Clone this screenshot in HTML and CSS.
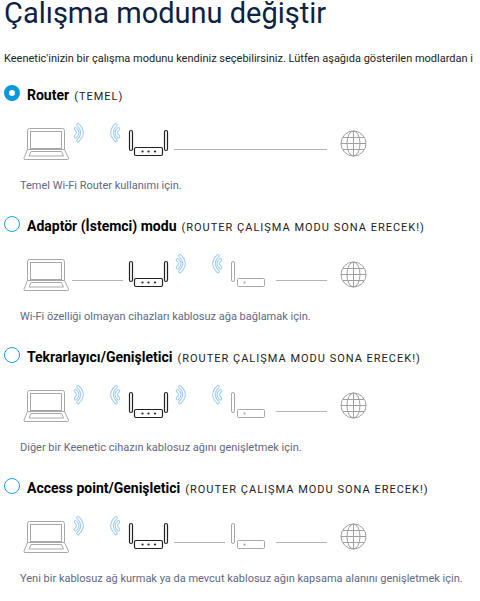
FILE: index.html
```
<!DOCTYPE html>
<html lang="tr">
<head>
    <meta charset="UTF-8">
    <meta name="viewport" content="width=device-width, initial-scale=1.0">
    <title>Çalışma modunu değiştir</title>
    <link rel="stylesheet" href="styles.css">
</head>
<body>

    <!-- Shared drawings for the network diagrams -->
    <svg class="sprite" aria-hidden="true">
        <symbol id="laptop" viewBox="0 0 51 40">
            <g fill="none" stroke="#a8a8a8">
                <path d="M6.5 27.5V8.5a2 2 0 0 1 2-2h33a2 2 0 0 1 2 2v19"/>
                <rect x="9.5" y="9.5" width="31" height="17"/>
                <path d="M6.5 27.5h37l4 8.5q.5 1.5-1 1.5h-42.5q-1.500 0-1-1.5z"/>
                <path d="M10 29.5h30.5l2 4.5h-34.5z"/>
            </g>
        </symbol>
        <symbol id="router" viewBox="0 0 51 40">
            <g fill="none" stroke="#222" stroke-width="1.2">
                <rect x="6.5" y="8.5" width="3" height="20" rx="1.5"/>
                <rect x="41.5" y="8.5" width="3" height="20" rx="1.5"/>
                <rect x="11.5" y="25.5" width="28" height="8" rx="1.5"/>
            </g>
            <g fill="#222">
                <circle cx="19.5" cy="29.5" r="1.1"/>
                <circle cx="25.5" cy="29.5" r="1.1"/>
                <circle cx="32" cy="29.5" r="1.1"/>
            </g>
        </symbol>
        <symbol id="modem" viewBox="0 0 51 40">
            <g fill="none" stroke="#a8a8a8">
                <rect x="6.5" y="8.5" width="3" height="20" rx="1.5"/>
                <rect x="12.5" y="25.5" width="27" height="8" rx="1"/>
            </g>
            <circle cx="19.5" cy="29.5" r="1" fill="#999"/>
        </symbol>
        <symbol id="globe" viewBox="0 0 51 40">
            <g fill="none" stroke="#a0a0a0">
                <circle cx="26.5" cy="21.5" r="12.5"/>
                <ellipse cx="26.5" cy="21.5" rx="6.5" ry="12.5"/>
                <path d="M26.5 9v25M14 21.5h25M16 15.5h21M16 27.5h21"/>
            </g>
        </symbol>
        <symbol id="line" viewBox="0 0 51 40">
            <path d="M0 27.5h51" stroke="#b4b4b4"/>
        </symbol>
        <symbol id="waves" viewBox="0 0 51 40">
            <g id="arcs" fill="none" stroke-linecap="round">
                <g stroke="#9ccbfa" stroke-width="3.6">
                    <path d="M6 2.8Q14 10.5 6 18.5"/>
                    <path d="M3.5 6.8Q8 10.5 3.5 14.6"/>
                </g>
                <g stroke="#fff" stroke-width="1.6">
                    <path d="M6 2.8Q14 10.5 6 18.5"/>
                    <path d="M3.5 6.8Q8 10.5 3.5 14.6"/>
                </g>
            </g>
            <use href="#arcs" transform="matrix(-1 0 0 1 50 0)"/>
        </symbol>
    </svg>

    <main class="page">
        <h1>Çalışma modunu değiştir</h1>
        <p class="intro">Keenetic'inizin bir çalışma modunu kendiniz seçebilirsiniz. Lütfen aşağıda gösterilen modlardan i</p>

        <form class="modes">
            <section class="mode">
                <label class="mode-head">
                    <input type="radio" name="mode" value="router" checked>
                    <span class="mode-name">Router</span>
                    <span class="mode-note">(TEMEL)</span>
                </label>
                <div class="diagram">
                    <svg><use href="#laptop"/></svg>
                    <svg><use href="#waves"/></svg>
                    <svg><use href="#router"/></svg>
                    <svg><use href="#line"/></svg>
                    <svg><use href="#line"/></svg>
                    <svg><use href="#line"/></svg>
                    <svg><use href="#globe"/></svg>
                </div>
                <p class="mode-text">Temel Wi-Fi Router kullanımı için.</p>
            </section>

            <section class="mode">
                <label class="mode-head">
                    <input type="radio" name="mode" value="adapter">
                    <span class="mode-name">Adaptör (İstemci) modu</span>
                    <span class="mode-note">(ROUTER ÇALIŞMA MODU SONA ERECEK!)</span>
                </label>
                <div class="diagram">
                    <svg><use href="#laptop"/></svg>
                    <svg><use href="#line"/></svg>
                    <svg><use href="#router"/></svg>
                    <svg><use href="#waves"/></svg>
                    <svg><use href="#modem"/></svg>
                    <svg><use href="#line"/></svg>
                    <svg><use href="#globe"/></svg>
                </div>
                <p class="mode-text">Wi-Fi özelliği olmayan cihazları kablosuz ağa bağlamak için.</p>
            </section>

            <section class="mode">
                <label class="mode-head">
                    <input type="radio" name="mode" value="repeater">
                    <span class="mode-name">Tekrarlayıcı/Genişletici</span>
                    <span class="mode-note">(ROUTER ÇALIŞMA MODU SONA ERECEK!)</span>
                </label>
                <div class="diagram">
                    <svg><use href="#laptop"/></svg>
                    <svg><use href="#waves"/></svg>
                    <svg><use href="#router"/></svg>
                    <svg><use href="#waves"/></svg>
                    <svg><use href="#modem"/></svg>
                    <svg><use href="#line"/></svg>
                    <svg><use href="#globe"/></svg>
                </div>
                <p class="mode-text">Diğer bir Keenetic cihazın kablosuz ağını genişletmek için.</p>
            </section>

            <section class="mode">
                <label class="mode-head">
                    <input type="radio" name="mode" value="ap">
                    <span class="mode-name">Access point/Genişletici</span>
                    <span class="mode-note">(ROUTER ÇALIŞMA MODU SONA ERECEK!)</span>
                </label>
                <div class="diagram">
                    <svg><use href="#laptop"/></svg>
                    <svg><use href="#waves"/></svg>
                    <svg><use href="#router"/></svg>
                    <svg><use href="#line"/></svg>
                    <svg><use href="#modem"/></svg>
                    <svg><use href="#line"/></svg>
                    <svg><use href="#globe"/></svg>
                </div>
                <p class="mode-text">Yeni bir kablosuz ağ kurmak ya da mevcut kablosuz ağın kapsama alanını genişletmek için.</p>
            </section>
        </form>
    </main>

</body>
</html>
```
FILE: styles.css
```
body {
    margin: 0;
    background-color: #fff;
    color: #222;
    font-family: Roboto, "Liberation Sans", sans-serif;
    font-size: 11px;
    line-height: 16px;
}
.sprite {
    display: none;
}
.page {
    padding: 0 4px;
}
h1 {
    margin: 0;
    color: #0f2143;
    font-size: 29px;
    font-weight: 400;
    line-height: 26px;
}
.intro {
    margin: 25px 0 18px;
    white-space: nowrap;
}
.modes {
    display: flex;
    flex-direction: column;
    gap: 22px;
}
.mode-head {
    display: flex;
    align-items: baseline;
    gap: 5px;
    height: 20px;
    color: #000;
    line-height: 20px;
    white-space: nowrap;
    cursor: pointer;
}
.mode-head input {
    appearance: none;
    align-self: flex-start;
    box-sizing: border-box;
    width: 16px;
    height: 16px;
    margin: 0 2px 0 0;
    border: 1px solid #1ba1e2;
    border-radius: 50%;
    background-color: #fff;
}
.mode-head input:checked {
    border: 5px solid #0a98dc;
}
.mode-name {
    font-size: 14px;
    font-weight: 700;
}
.mode-note {
    color: #222;
    font-size: 11px;
    letter-spacing: 1px;
}
.diagram {
    display: flex;
    margin: 17px 0 15px 17px;
}
.diagram svg {
    flex: none;
    width: 51px;
    height: 40px;
}
.mode-text {
    margin: 0 0 0 16px;
    color: #5f6883;
    line-height: 17px;
    white-space: nowrap;
}
```
